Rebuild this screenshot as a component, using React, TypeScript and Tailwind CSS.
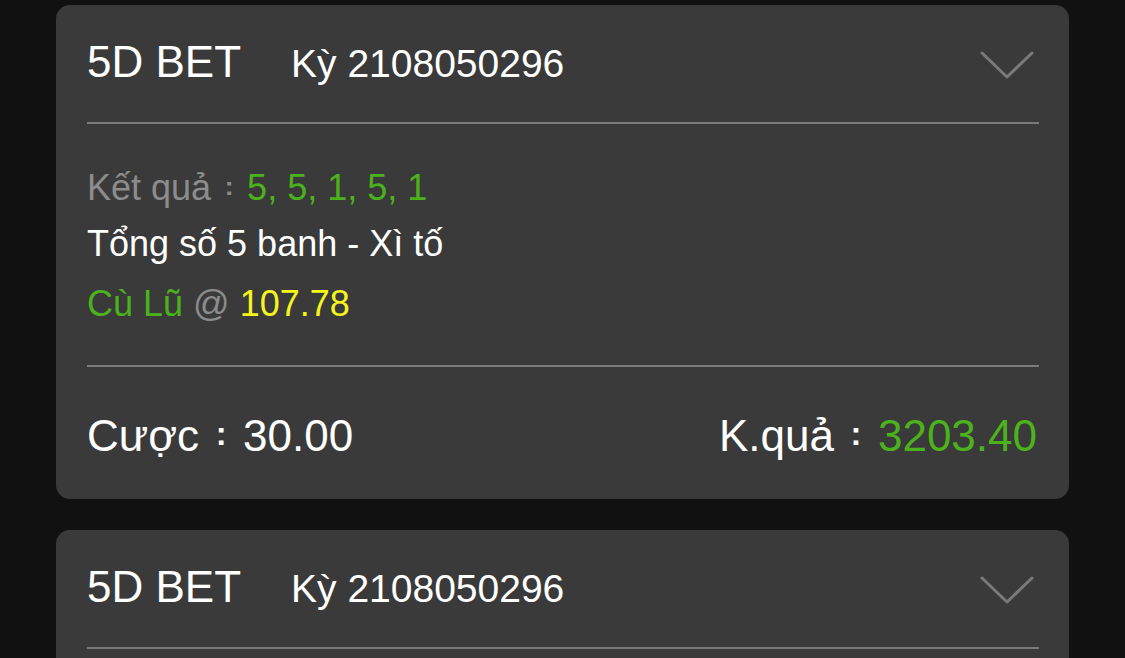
import React from "react";

const FONT = { fontFamily: '"Liberation Sans", Arial, sans-serif' };

function Colon() {
  return (
    <span className="inline-block w-[1em] text-center leading-[0]">
      <span className="text-[0.74em] font-bold leading-[0] align-[0.17em]">:</span>
    </span>
  );
}

function Chevron() {
  return (
    <svg width="54" height="28" viewBox="0 0 54 28" className="mr-[5px] mt-[5px]">
      <polyline
        points="2,2 27,26 52,2"
        fill="none"
        stroke="#7a7a7a"
        strokeWidth="3"
        strokeLinecap="round"
        strokeLinejoin="round"
      />
    </svg>
  );
}

function Header() {
  return (
    <>
      <div className="flex h-[117px] items-center justify-between pb-[3px]">
        <div className="flex items-baseline">
          <span className="text-[44px] leading-none text-white">5D BET</span>
          <span className="ml-[50px] text-[39px] leading-none text-white">Kỳ 2108050296</span>
        </div>
        <Chevron />
      </div>
      <div className="h-[2px] bg-[#7a7a7a]" />
    </>
  );
}

function Card() {
  return (
    <div className="w-[1013px] rounded-[14px] bg-[#3a3a3a] pl-[31px] pr-[30px]">
      <Header />
      <div className="h-[241px] pt-[36px] text-[36px] leading-[56px]">
        <div>
          <span className="text-[#8c8c8c]">
            Kết quả
            <Colon />
          </span>
          <span className="text-[#4cb21c]">5, 5, 1, 5, 1</span>
        </div>
        <div className="text-white">Tổng số 5 banh - Xì tố</div>
        <div className="mt-[4px]">
          <span className="text-[#4cb21c]">Cù Lũ</span>
          <span className="text-[#8c8c8c]"> @ </span>
          <span className="text-[#f5f51e]">107.78</span>
        </div>
      </div>
      <div className="h-[2px] bg-[#7a7a7a]" />
      <div className="flex h-[132px] items-center justify-between pt-[6px] text-[44px] leading-none text-white">
        <div>
          Cược
          <Colon />
          30.00
        </div>
        <div className="pr-[2px]">
          K.quả
          <Colon />
          <span className="text-[#4cb21c]">3203.40</span>
        </div>
      </div>
    </div>
  );
}

function PartialCard() {
  return (
    <div className="w-[1013px] rounded-[14px] bg-[#3a3a3a] pl-[31px] pr-[30px]">
      <Header />
      <div className="h-[200px]" />
    </div>
  );
}

export default function App() {
  return (
    <div className="h-[658px] w-[1125px] overflow-hidden bg-[#111111]" style={FONT}>
      <div className="flex flex-col gap-[31px] pl-[56px] pt-[5px]">
        <Card />
        <PartialCard />
      </div>
    </div>
  );
}
